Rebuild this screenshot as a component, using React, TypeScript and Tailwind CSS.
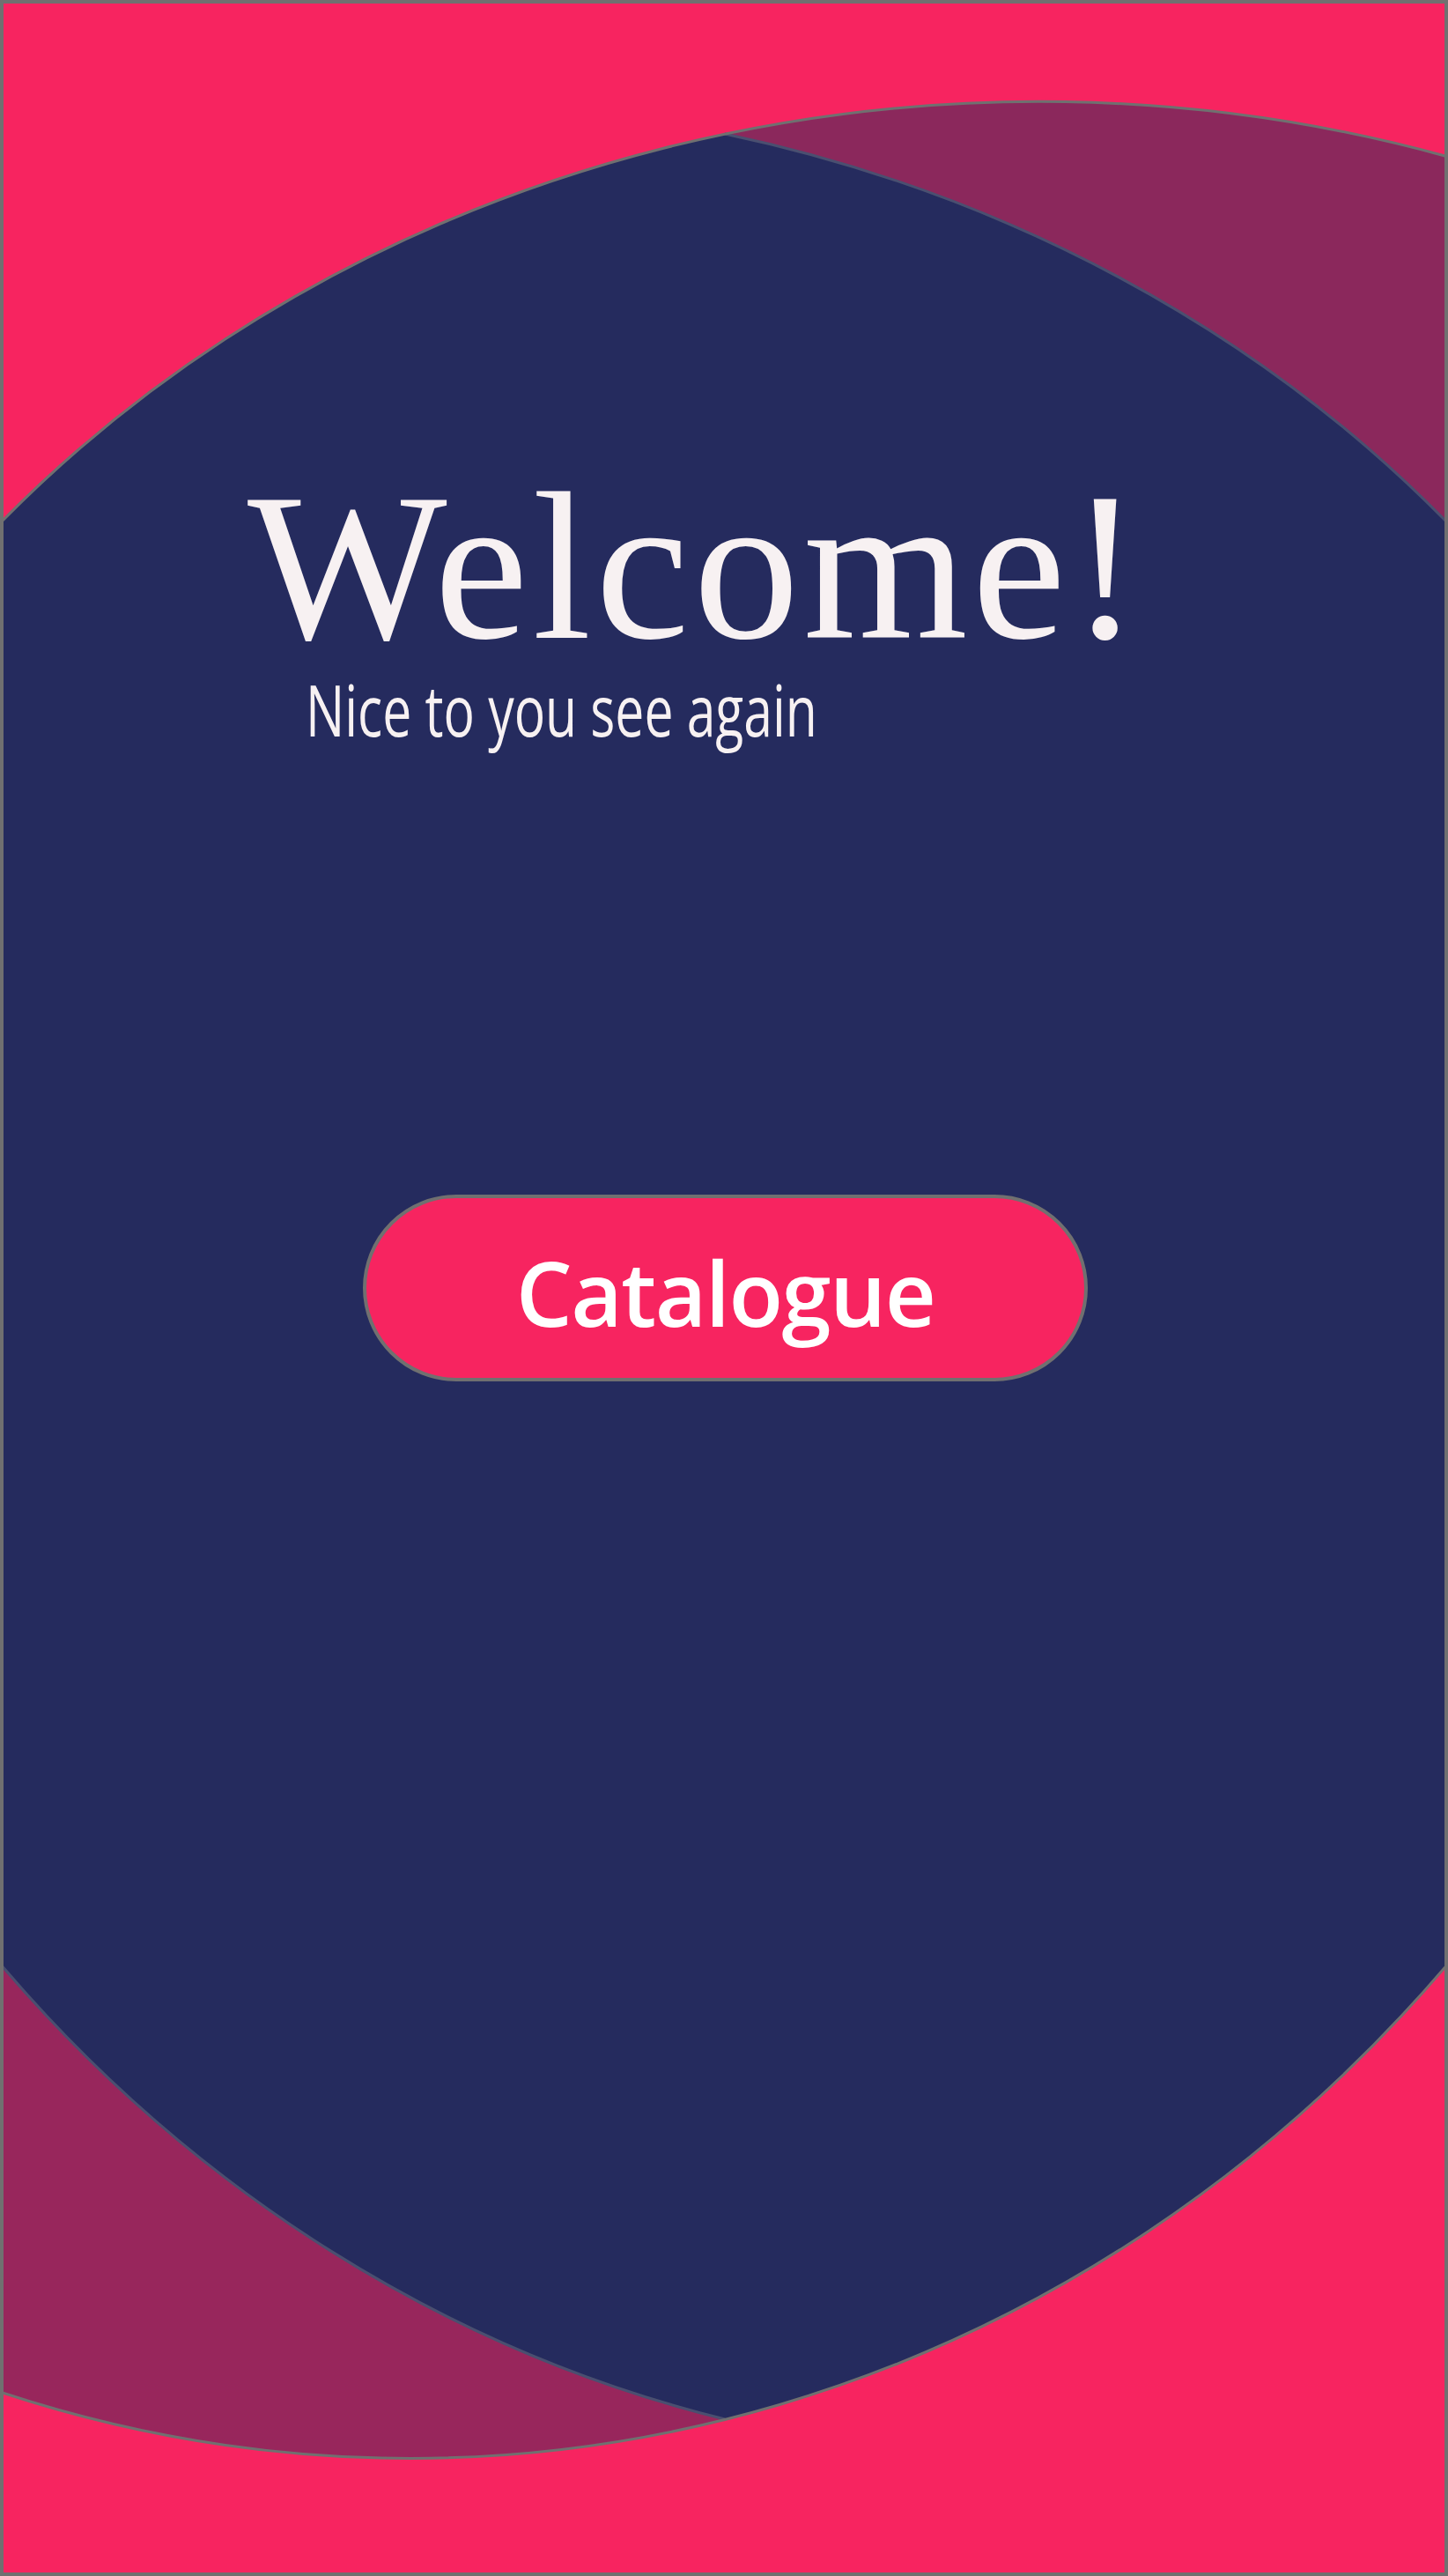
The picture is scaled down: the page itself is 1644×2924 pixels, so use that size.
import type { ReactNode } from 'react'

const GRAY = '#707070'
const SEAM = '#4a4f70'

// big ellipse arcs (radii picked to match the curves in the mockup)
const TOP_ARC = 'A1571 1408 0 0 1'
const TOP_ARC_BACK = 'A1571 1408 0 0 0'
const BOTTOM_ARC = 'A1612 1768 0 0 1'
const BOTTOM_ARC_BACK = 'A1612 1768 0 0 0'

function Backdrop() {
  return (
    <svg
      aria-hidden
      className="pointer-events-none absolute inset-0 h-full w-full"
      viewBox="4 4 1636 2916"
      preserveAspectRatio="none"
    >
      <path
        d={`M0 594 ${TOP_ARC} 823 152 ${TOP_ARC} 1644 594 L1644 2229 ${BOTTOM_ARC} 823 2746 ${BOTTOM_ARC} 0 2229 Z`}
        fill="#252b5e"
      />
      <path d={`M823 152 ${TOP_ARC} 1644 178 L1644 594 ${TOP_ARC_BACK} 823 152 Z`} fill="#8b285c" />
      <path d={`M0 2229 ${BOTTOM_ARC_BACK} 823 2746 ${BOTTOM_ARC} 0 2715 Z`} fill="#98265c" />

      <path d={`M823 152 ${TOP_ARC} 1644 594`} fill="none" stroke={SEAM} strokeWidth={3} />
      <path d={`M0 2229 ${BOTTOM_ARC_BACK} 823 2746`} fill="none" stroke={SEAM} strokeWidth={3} />
      <path d={`M0 594 ${TOP_ARC} 1644 178`} fill="none" stroke={GRAY} strokeWidth={3} />
      <path d={`M1644 2229 ${BOTTOM_ARC} 0 2715`} fill="none" stroke={GRAY} strokeWidth={3} />
    </svg>
  )
}

function PillButton({ children }: { children: ReactNode }) {
  return (
    <button
      type="button"
      className="ml-[408px] mt-[511px] flex h-[212px] w-[823px] items-center justify-center rounded-full border-4 border-[#707070] bg-[#f72460] pt-[10px] font-['Open_Sans',sans-serif] text-[101px] font-semibold leading-none tracking-[-0.015em] text-white"
    >
      {children}
    </button>
  )
}

export default function App() {
  return (
    <main className="relative h-[2924px] w-[1644px] overflow-hidden border-4 border-[#707070] bg-[#f72460]">
      <Backdrop />

      <div className="relative flex flex-col items-start pt-[519px]">
        <h1 className="ml-[277px] font-['Liberation_Serif',serif] text-[240px] font-normal leading-none tracking-[0.02em] text-[#f7f1f2]">
          Welcome!
        </h1>
        {/* condensed face isn't installed, squeeze Open Sans instead */}
        <p className="ml-[343px] mt-[2px] origin-left scale-x-[0.735] whitespace-nowrap font-['Open_Sans',sans-serif] text-[80px] font-normal leading-none text-[#f7f1f2]">
          Nice to you see again
        </p>

        <PillButton>Catalogue</PillButton>
      </div>
    </main>
  )
}
